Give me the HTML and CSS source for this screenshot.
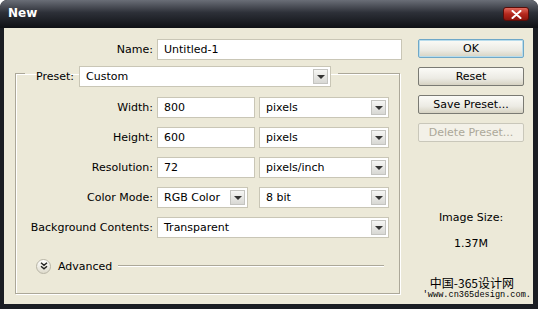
FILE: index.html
```html
<!DOCTYPE html>
<html lang="en">
<head>
    <meta charset="UTF-8">
    <title>New</title>
    <link rel="stylesheet" href="styles.css">
</head>
<body>
    <div class="window">
        <div class="titlebar">
            <span class="title">New</span>
            <button class="close-btn" aria-label="Close">
                <svg width="11" height="9" viewBox="0 0 11 9">
                    <path d="M1.5 1 L9.5 8 M9.5 1 L1.5 8" stroke="#fff" stroke-width="2" stroke-linecap="round"/>
                </svg>
            </button>
        </div>

        <div class="content">
            <div class="form">
                <div class="row name-row">
                    <span class="label">Name:</span>
                    <div class="field name-field">Untitled-1</div>
                </div>

                <fieldset class="group">
                    <legend class="preset">
                        <span class="preset-label">Preset:</span>
                        <div class="field select preset-select">Custom<span class="arrow"></span></div>
                    </legend>

                    <div class="row">
                        <span class="label">Width:</span>
                        <div class="field num">800</div>
                        <div class="field select unit">pixels<span class="arrow"></span></div>
                    </div>
                    <div class="row">
                        <span class="label">Height:</span>
                        <div class="field num">600</div>
                        <div class="field select unit">pixels<span class="arrow"></span></div>
                    </div>
                    <div class="row">
                        <span class="label">Resolution:</span>
                        <div class="field num">72</div>
                        <div class="field select unit">pixels/inch<span class="arrow"></span></div>
                    </div>
                    <div class="row">
                        <span class="label">Color Mode:</span>
                        <div class="field select mode">RGB Color<span class="arrow"></span></div>
                        <div class="field select unit">8 bit<span class="arrow"></span></div>
                    </div>
                    <div class="row">
                        <span class="label">Background Contents:</span>
                        <div class="field select wide">Transparent<span class="arrow"></span></div>
                    </div>

                    <div class="advanced">
                        <span class="adv-icon">
                            <svg width="8" height="8" viewBox="0 0 8 8">
                                <path d="M1 0.8 L4 3.3 L7 0.8 M1 4.3 L4 6.8 L7 4.3" fill="none" stroke="#222" stroke-width="1.4"/>
                            </svg>
                        </span>
                        <span class="adv-text">Advanced</span>
                        <span class="adv-line"></span>
                    </div>
                </fieldset>
            </div>

            <div class="side">
                <button class="btn default">OK</button>
                <button class="btn">Reset</button>
                <button class="btn">Save Preset...</button>
                <button class="btn" disabled>Delete Preset...</button>

                <div class="image-size">
                    <div>Image Size:</div>
                    <div class="size-value">1.37M</div>
                </div>

                <div class="watermark">
                    <div class="wm-cn">中国-365设计网</div>
                    <div class="wm-url">'www.cn365design.com.</div>
                </div>
            </div>
        </div>
    </div>
</body>
</html>
```

FILE: styles.css
```css
* {
    margin: 0;
    padding: 0;
    box-sizing: border-box;
}

body {
    background-color: #ffffff;
    font-family: 'DejaVu Sans', 'Liberation Sans', sans-serif;
    font-size: 11px;
    color: #000000;
}

.window {
    width: 538px;
    height: 309px;
    display: flex;
    flex-direction: column;
    background-color: #1a1d23;
    border-radius: 7px 7px 0 0;
    padding: 0 5px 5px 4px;
    overflow: hidden;
}

/* Title bar */
.titlebar {
    height: 28px;
    margin: 0 -5px 0 -4px;
    padding: 0 9px 0 8px;
    display: flex;
    justify-content: space-between;
    align-items: flex-start;
    background: linear-gradient(#6a6e77, #2d3038 45%, #0f1115);
    border-radius: 7px 7px 0 0;
}

.title {
    margin-top: 6px;
    color: #ffffff;
    font-size: 12px;
    font-weight: bold;
}

.close-btn {
    width: 26px;
    height: 14px;
    margin-top: 7px;
    display: flex;
    justify-content: center;
    align-items: center;
    border: 1px solid #5a0d08;
    border-radius: 3px;
    background: linear-gradient(#e0685c, #b5281d 50%, #8c150d);
}

/* Main area */
.content {
    flex: 1;
    display: flex;
    gap: 16px;
    background-color: #ece9d8;
    padding: 11px 0 0 11px;
}

.form {
    width: 387px;
}

.row {
    display: flex;
    align-items: center;
    gap: 4px;
    height: 21px;
    margin-bottom: 9px;
}

.label {
    width: 127px;
    text-align: right;
    white-space: nowrap;
}

.name-row {
    margin-bottom: 0;
}

.name-row .label {
    width: 138px;
}

.field {
    position: relative;
    height: 21px;
    display: flex;
    align-items: center;
    padding-left: 6px;
    background-color: #ffffff;
    border: 1px solid #c9c6b6;
    white-space: nowrap;
}

.name-field {
    width: 245px;
}

.num {
    width: 98px;
}

.unit {
    width: 130px;
}

.mode {
    width: 91px;
    margin-right: 7px;
}

.wide {
    width: 232px;
}

.select .arrow {
    position: absolute;
    right: 2px;
    top: 2px;
    width: 15px;
    height: 15px;
    border: 1px solid #c4c4c0;
    background: linear-gradient(#f6f6f4, #d8d8d4);
}

.select .arrow::after {
    content: '';
    position: absolute;
    left: 3px;
    top: 5px;
    border-left: 4px solid transparent;
    border-right: 4px solid transparent;
    border-top: 4px solid #333333;
}

/* Group box */
.group {
    margin-top: 6px;
    width: 385px;
    border: 1px solid #aca899;
    box-shadow: inset 1px 1px 0 #ffffff, 1px 1px 0 #ffffff;
    padding: 17px 10px 19px 10px;
}

.preset {
    height: 14px;
    display: flex;
    align-items: flex-start;
    gap: 5px;
    padding: 0 7px 0 11px;
    margin-left: -1px;
}

.preset-label {
    line-height: 21px;
}

.preset-select {
    width: 252px;
}

/* Advanced toggle */
.advanced {
    display: flex;
    align-items: center;
    margin-top: 20px;
    padding-left: 10px;
    height: 16px;
}

.adv-icon {
    width: 15px;
    height: 15px;
    display: flex;
    justify-content: center;
    align-items: center;
    border: 1px solid #b8b5a6;
    border-radius: 50%;
    background: linear-gradient(#ffffff, #dedbcc);
}

.adv-text {
    margin-left: 7px;
}

.adv-line {
    width: 266px;
    margin-left: 6px;
    border-top: 1px solid #aca899;
    border-bottom: 1px solid #ffffff;
}

/* Right column */
.side {
    width: 115px;
    display: flex;
    flex-direction: column;
    align-items: flex-start;
}

.btn {
    width: 106px;
    height: 19px;
    margin-bottom: 9px;
    font-family: inherit;
    font-size: 11px;
    color: #000000;
    border: 1px solid #7a7a73;
    border-radius: 2px;
    background: linear-gradient(#fbfbf7, #ecebe4 60%, #d6d2c2);
}

.btn.default {
    border-color: #6fa8c8;
    box-shadow: inset 0 0 0 1px #b8dcec;
}

.btn:disabled {
    color: #aca899;
    border-color: #c9c7ba;
    background: #f3f1e8;
}

.image-size {
    width: 106px;
    margin-top: 60px;
    text-align: center;
    line-height: 13px;
}

.size-value {
    margin-top: 13px;
}

.watermark {
    margin-top: auto;
    margin-bottom: 2px;
    align-self: flex-end;
    margin-right: 2px;
    text-align: right;
    line-height: 13px;
}

.wm-cn {
    font-family: 'Noto Sans CJK SC', sans-serif;
    font-size: 12px;
    margin-right: 17px;
}

.wm-url {
    font-family: 'Liberation Mono', monospace;
    font-size: 8.6px;
}
```
